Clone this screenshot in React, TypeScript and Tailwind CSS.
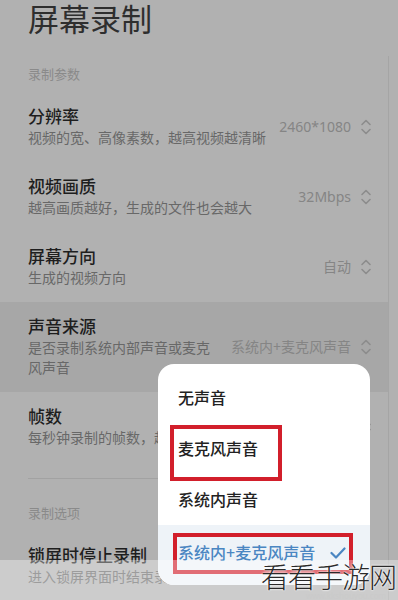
import React from "react"

interface SettingRow {
  title: string
  desc: string
  value: string
  active?: boolean
  narrow?: boolean
}

const params: SettingRow[] = [
  { title: "分辨率", desc: "视频的宽、高像素数，越高视频越清晰", value: "2460*1080" },
  { title: "视频画质", desc: "越高画质越好，生成的文件也会越大", value: "32Mbps" },
  { title: "屏幕方向", desc: "生成的视频方向", value: "自动" },
  { title: "声音来源", desc: "是否录制系统内部声音或麦克风声音", value: "系统内+麦克风声音", active: true, narrow: true },
  { title: "帧数", desc: "每秒钟录制的帧数，越高越流畅", value: "60帧" },
]

function Chevrons() {
  return (
    <svg width="12" height="18" viewBox="0 0 12 18" fill="none" stroke="#8c8c8c" strokeWidth="1.6" strokeLinecap="round" strokeLinejoin="round">
      <path d="M2 6.5 L6 2.5 L10 6.5" />
      <path d="M2 11.5 L6 15.5 L10 11.5" />
    </svg>
  )
}

function Row({ row }: { row: SettingRow }) {
  return (
    <div className={`flex items-center justify-between py-[14px] pl-7 pr-[16px] ${row.active ? "bg-[#a7a7a7]" : ""}`}>
      <div className={`flex flex-col ${row.narrow ? "max-w-[186px]" : ""}`}>
        <p className="text-[17px] leading-[22px] font-medium text-[#1e1e1e]">{row.title}</p>
        <p className="text-[14px] leading-[20px] text-[#686868]">{row.desc}</p>
      </div>
      {row.value && (
        <div className="flex items-center gap-[9px] shrink-0">
          <span className="text-[14px] leading-[20px] text-[#858585]">{row.value}</span>
          <Chevrons />
        </div>
      )}
    </div>
  )
}

const options = ["无声音", "麦克风声音", "系统内声音", "系统内+麦克风声音"]

export default function App() {
  return (
    <section className="relative h-[600px] w-[398px] overflow-hidden bg-[#b1b1b1] font-['Noto_Sans','Noto_Sans_CJK_SC',sans-serif]">
      <h1 className="pl-7 text-[31px] leading-[38px] font-normal text-[#2e2e2e]">屏幕录制</h1>

      <div className="mt-[18px] w-[389px] border-r border-[#a5a5a5] pt-[8px]">
        <p className="pl-7 text-[13px] leading-[20px] text-[#8a8a8a]">录制参数</p>
        <div className="mt-2 flex flex-col">
          {params.map((row) => (
            <Row key={row.title} row={row} />
          ))}
        </div>

        <div className="mx-7 mt-4 h-px bg-[#a2a2a2]" />

        <p className="mt-6 pl-7 text-[13px] leading-[20px] text-[#8a8a8a]">录制选项</p>
        <div className="mt-2">
          <Row row={{ title: "锁屏时停止录制", desc: "进入锁屏界面时结束录制", value: "" }} />
        </div>
      </div>

      {/* dropdown menu */}
      <div className="absolute left-[158px] top-[364px] flex w-[212px] flex-col overflow-hidden rounded-[16px] bg-white pt-2">
        {options.map((opt, i) => {
          const selected = i === 3
          return (
            <div
              key={opt}
              className={`relative flex items-center justify-between px-5 ${selected ? "h-[60px] bg-[#eef3f8] pb-[4px]" : "h-[51px]"}`}
            >
              <span className={`text-[16px] font-medium ${selected ? "text-[#4a86c2]" : "text-[#222]"}`}>{opt}</span>
              {selected && (
                <svg width="16" height="12" viewBox="0 0 16 12" fill="none" stroke="#4a86c2" strokeWidth="2.2" strokeLinecap="round" strokeLinejoin="round" className="mr-[4px]">
                  <path d="M1.5 6 L6 10.5 L14.5 1.5" />
                </svg>
              )}
              {i === 1 && <div className="absolute left-[12px] top-[2px] h-[56px] w-[112px] border-[4px] border-[#d21f2b]" />}
              {selected && <div className="absolute left-[15px] top-[8px] h-[41px] w-[180px] border-[4px] border-[#d21f2b]" />}
            </div>
          )
        })}
      </div>

      {/* watermark band */}
      <div className="absolute bottom-0 left-0 h-[40px] w-full bg-white/35" />
      <span className="absolute bottom-[8px] right-[2px] text-[28px] leading-[30px] font-light tracking-[-1px] text-[#2a2a2a] [text-shadow:0_0_2px_#fff,0_0_2px_#fff]">
        看看手游网
      </span>
      <span className="absolute bottom-0 right-[12px] text-[8px] leading-[9px] text-[#c9c9c9]/60">www.kkshouyou.com</span>
    </section>
  )
}
